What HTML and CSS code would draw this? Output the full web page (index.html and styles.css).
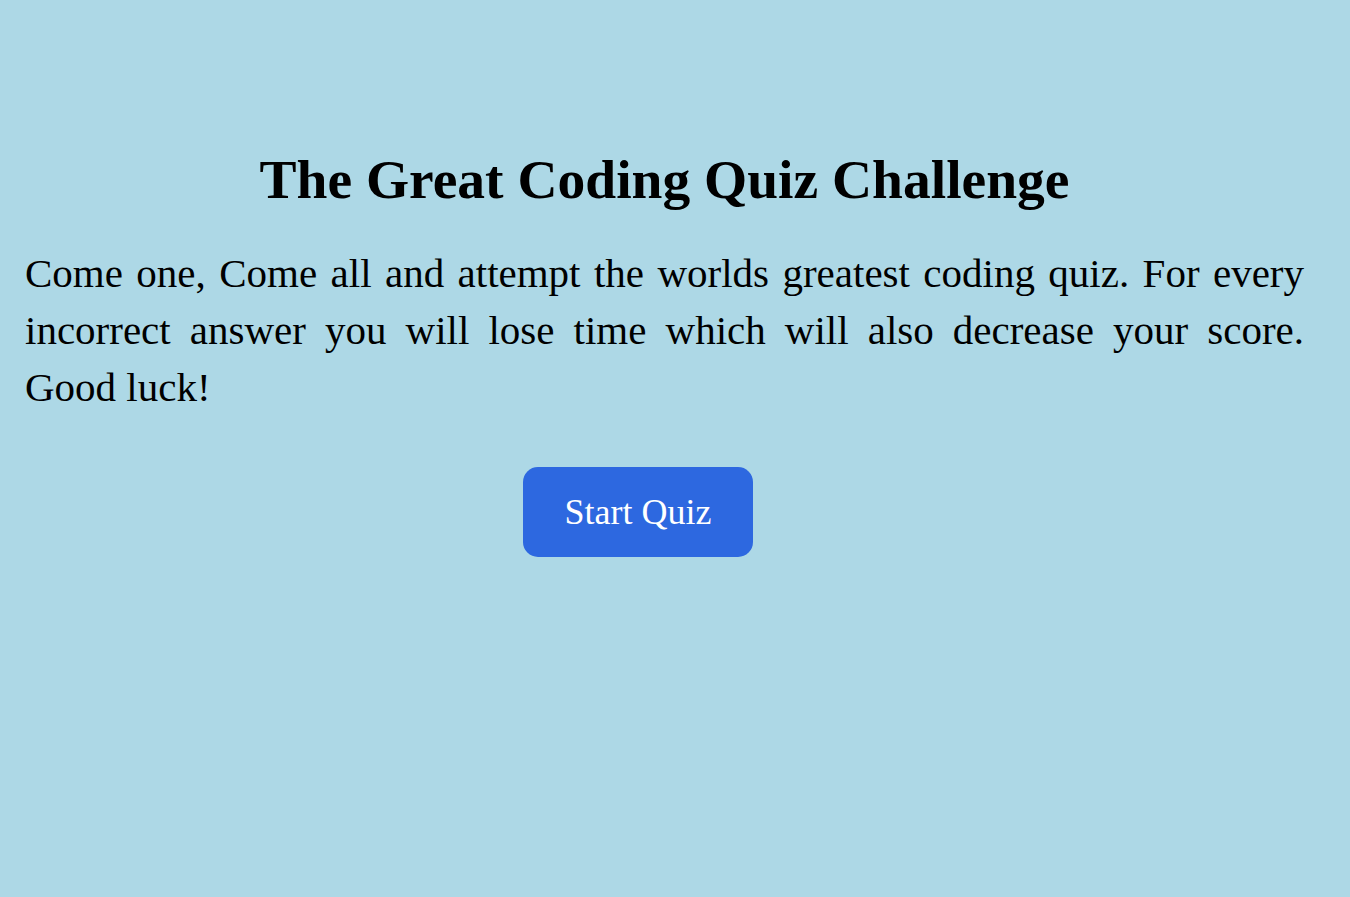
FILE: index.html
```html
<!DOCTYPE html>
<html lang="en">
<head>
<meta charset="utf-8">
<title>Coding Quiz</title>
<link rel="stylesheet" href="styles.css">
</head>
<body>
<main class="quiz">
  <h1 class="title">The Great Coding Quiz Challenge</h1>
  <p class="intro">Come one, Come all and attempt the worlds greatest coding quiz. For every incorrect answer you will lose time which will also decrease your score. <span class="keep">Good luck!</span></p>
  <div class="actions">
    <button class="start">Start Quiz</button>
  </div>
</main>
</body>
</html>
```
FILE: styles.css
```css
html, body {
  margin: 0;
  padding: 0;
  background: #add8e6;
  font-family: "Liberation Serif", "Times New Roman", serif;
  color: #000;
}
.quiz {
  padding: 148px 46px 0 25px;
  display: flex;
  flex-direction: column;
}
.title {
  margin: 0;
  text-align: center;
  font-size: 55.5px;
  line-height: 64px;
  font-weight: bold;
}
.intro {
  margin: 33px 0 0 0;
  font-size: 41px;
  line-height: 57px;
  text-align: justify;
}
.keep {
  white-space: nowrap;
}
.actions {
  display: flex;
  padding: 51px 0 0 498px;
}
.start {
  width: 230px;
  height: 90px;
  border: none;
  border-radius: 15px;
  background: #2d68e0;
  color: #fff;
  font-family: "Liberation Serif", "Times New Roman", serif;
  font-size: 36px;
  cursor: pointer;
}
```
